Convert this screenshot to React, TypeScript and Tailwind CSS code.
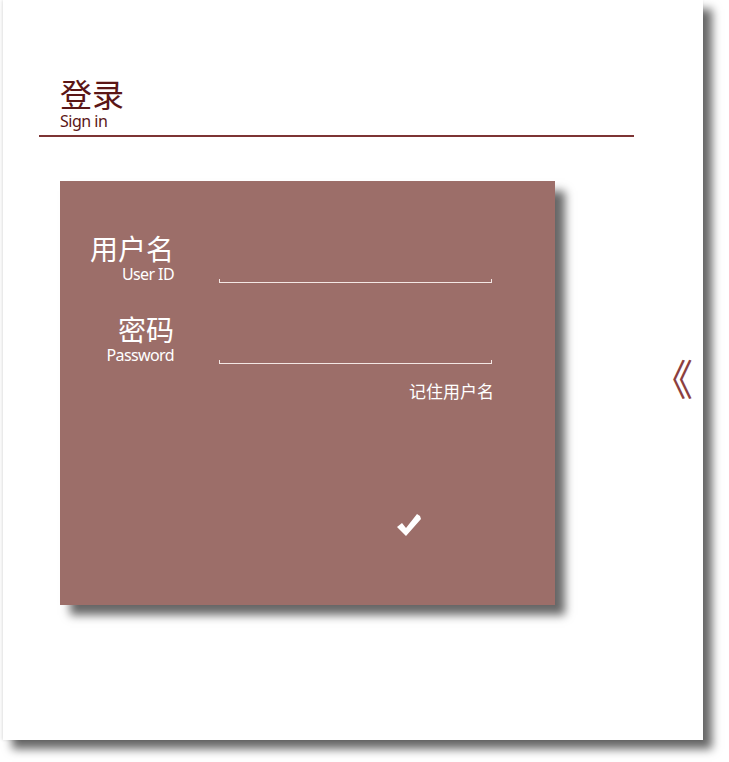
import React from 'react';

const cjk = { fontFamily: '"Noto Sans CJK SC", "Noto Sans", sans-serif' };
const latin = { fontFamily: '"Noto Sans", "Noto Sans CJK SC", sans-serif' };

// 输入框：只有底线和两端的小竖线
const FieldLine = () => (
  <div className="w-[273px] h-[4px] border-b border-x border-[#f3e7e4]" />
);

const FieldRow = ({ zh, en, className }: { zh: string, en: string, className?: string }) => (
  <div className={`flex items-end ${className ?? ''}`}>
    <div className="w-[114px] text-right text-white">
      <div className="text-[28px] leading-[30px]" style={cjk}>{zh}</div>
      <div className="text-[16px] leading-[18px] tracking-[-0.6px] mt-[2px]" style={latin}>{en}</div>
    </div>
    <div className="ml-[45px]">
      <FieldLine />
    </div>
  </div>
);

export default function App() {
  return (
    <div className="w-[729px] h-[762px] bg-white overflow-hidden">
      <div className="ml-[3px] w-[700px] h-[740px] bg-white shadow-[9px_9px_9px_rgba(0,0,0,0.6),-1px_0_3px_rgba(0,0,0,0.12)] pt-[75px]">
        {/* 标题 */}
        <div className="ml-[57px] text-[#5b1616]">
          <div className="text-[32px] leading-[36px]" style={cjk}>登录</div>
          <div className="text-[16px] leading-[18px] tracking-[-0.5px] mt-[1px]" style={latin}>Sign in</div>
        </div>
        <div className="ml-[36px] mt-[5px] w-[595px] h-[2px] bg-[#7d3434]" />

        <div className="flex items-start mt-[44px]">
          {/* 登录卡片 */}
          <div className="ml-[57px] w-[495px] h-[424px] bg-[#9c6e69] shadow-[10px_10px_9px_rgba(0,0,0,0.6)] pt-[52px]">
            <FieldRow zh="用户名" en="User ID" />
            <FieldRow zh="密码" en="Password" className="mt-[31px]" />
            <div className="w-[434px] text-right text-white text-[17px] leading-[20px] mt-[17px]" style={cjk}>
              记住用户名
            </div>
            <div className="ml-[337px] mt-[113px] w-[24px] h-[22px]">
              <svg width="24" height="22" viewBox="0 0 24 22">
                <polygon points="0,13 5,9 9,14 20,0 23,2 24,5 9,22" fill="#ffffff" />
              </svg>
            </div>
          </div>
          <div className="ml-[96px] mt-[174px] text-[42px] leading-[44px] text-[#8c3f3f]" style={cjk}>
            《
          </div>
        </div>
      </div>
    </div>
  );
}
